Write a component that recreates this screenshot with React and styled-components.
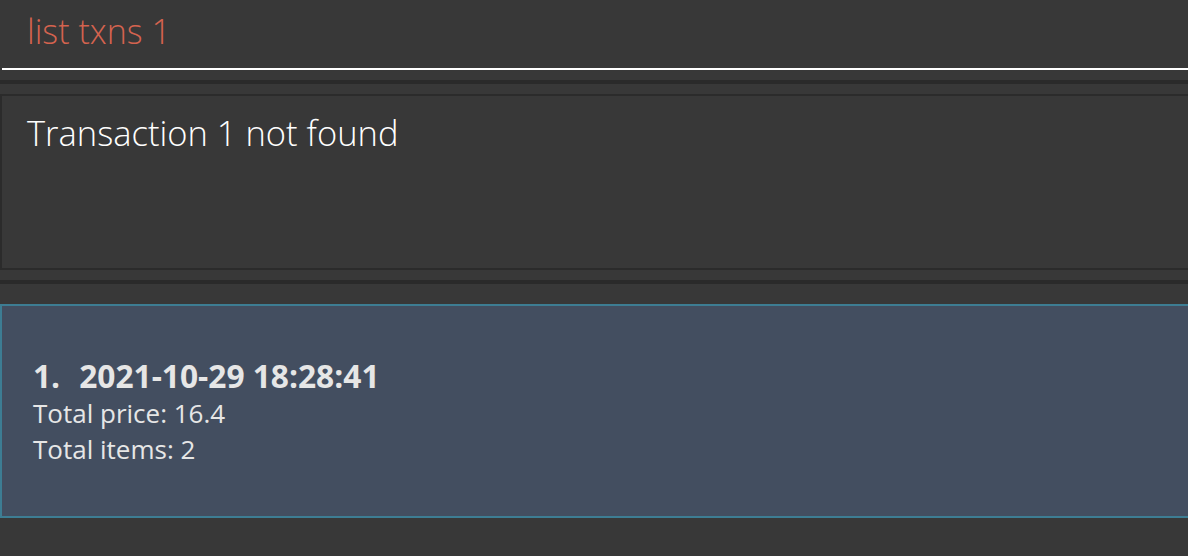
import React from "react";
import styled, { createGlobalStyle } from "styled-components";

const GlobalStyle = createGlobalStyle`
  html, body {
    margin: 0;
    padding: 0;
    background: #383838;
    overflow: hidden;
  }
  #root {
    width: 1188px;
    height: 556px;
  }
`;

const Window = styled.div`
  width: 1188px;
  height: 556px;
  background: #383838;
  font-family: "Open Sans", "Liberation Sans", sans-serif;
  display: flex;
  flex-direction: column;
`;

const CommandBox = styled.div`
  height: 68px;
  margin-left: 2px;
  border-bottom: 2px solid #ffffff;
  display: flex;
  align-items: flex-start;
  padding-left: 25px;
  box-sizing: content-box;
`;

const CommandText = styled.span`
  color: #d4634f;
  font-weight: 300;
  font-size: 34px;
  line-height: 1;
  margin-top: 14px;
`;

const Divider = styled.div`
  height: 4px;
  background: #2a2a2a;
  margin-top: ${(p) => p.$top}px;
`;

const ResultBox = styled.div`
  margin-top: 10px;
  height: 176px;
  width: 1200px;
  border: 2px solid #2b2b2b;
  background: #383838;
  padding: 15px 25px;
  box-sizing: border-box;
  color: #ffffff;
  font-weight: 300;
  font-size: 34.5px;
  line-height: 1.3;
`;

const ListArea = styled.div`
  padding-top: 20px;
`;

const Card = styled.div`
  height: 214px;
  width: 1200px;
  box-sizing: border-box;
  border: 2px solid #3d7d93;
  background: #434e60;
  display: flex;
  flex-direction: column;
  justify-content: center;
  padding-left: 31px;
  padding-top: 2px;
  color: #e6e6e6;
`;

const CardTitle = styled.div`
  display: flex;
  gap: 19px;
  font-weight: 700;
  font-size: 31.7px;
  line-height: 38px;
`;

const CardLine = styled.div`
  font-size: 26px;
  line-height: 36px;
`;

export default function App() {
  return (
    <Window>
      <GlobalStyle />
      <CommandBox>
        <CommandText>list txns 1</CommandText>
      </CommandBox>
      <Divider $top={10} />
      <ResultBox>Transaction 1 not found</ResultBox>
      <Divider $top={10} />
      <ListArea>
        <Card>
          <CardTitle>
            <span>1.</span>
            <span>2021-10-29 18:28:41</span>
          </CardTitle>
          <CardLine>Total price: 16.4</CardLine>
          <CardLine>Total items: 2</CardLine>
        </Card>
      </ListArea>
    </Window>
  );
}
